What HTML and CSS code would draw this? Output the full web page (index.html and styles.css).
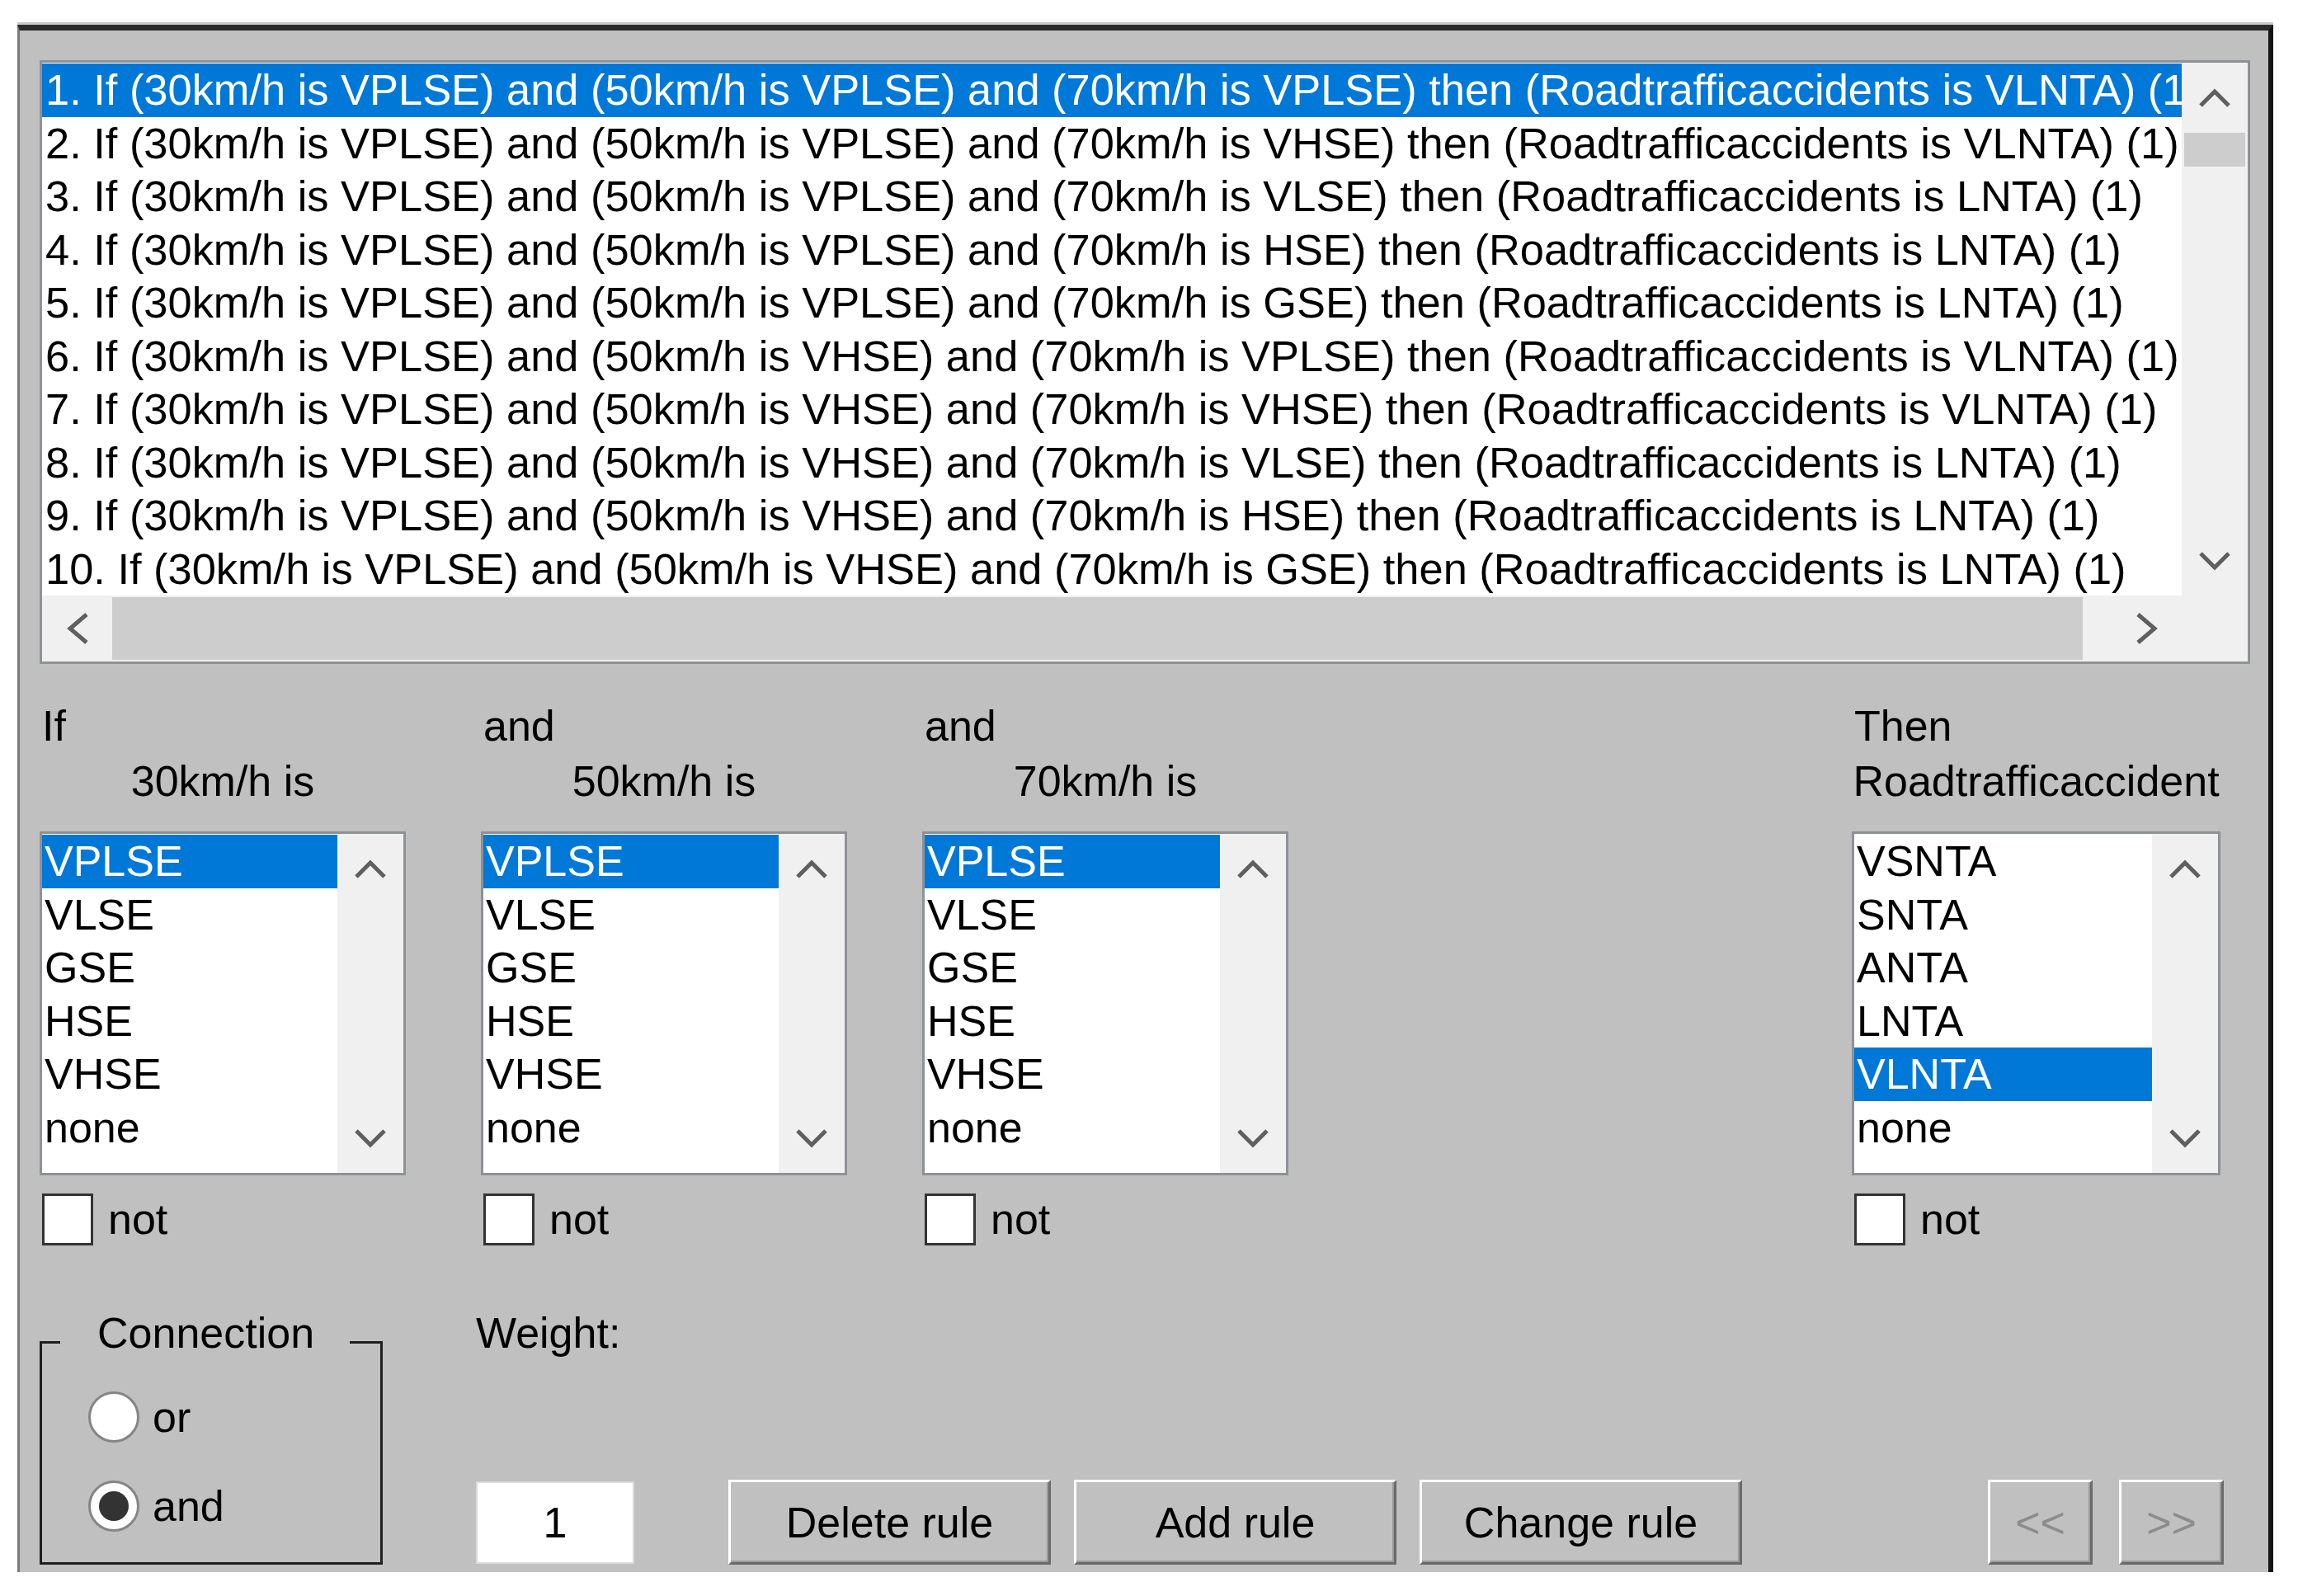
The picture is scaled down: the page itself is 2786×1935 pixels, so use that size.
FILE: index.html
```html
<!DOCTYPE html>
<html lang="en">
  <head>
    <meta charset="UTF-8" />
    <title>Rule Editor</title>
    <link rel="stylesheet" href="styles.css">
  </head>
  <body>
    <div class="fis-panel">
      <!-- rule list -->
      <div class="rule-list">
        <ul class="rule-rows">
          <li class="selected">1. If (30km/h is VPLSE) and (50km/h is VPLSE) and (70km/h is VPLSE) then (Roadtrafficaccidents is VLNTA) (1)</li>
          <li>2. If (30km/h is VPLSE) and (50km/h is VPLSE) and (70km/h is VHSE) then (Roadtrafficaccidents is VLNTA) (1)</li>
          <li>3. If (30km/h is VPLSE) and (50km/h is VPLSE) and (70km/h is VLSE) then (Roadtrafficaccidents is LNTA) (1)</li>
          <li>4. If (30km/h is VPLSE) and (50km/h is VPLSE) and (70km/h is HSE) then (Roadtrafficaccidents is LNTA) (1)</li>
          <li>5. If (30km/h is VPLSE) and (50km/h is VPLSE) and (70km/h is GSE) then (Roadtrafficaccidents is LNTA) (1)</li>
          <li>6. If (30km/h is VPLSE) and (50km/h is VHSE) and (70km/h is VPLSE) then (Roadtrafficaccidents is VLNTA) (1)</li>
          <li>7. If (30km/h is VPLSE) and (50km/h is VHSE) and (70km/h is VHSE) then (Roadtrafficaccidents is VLNTA) (1)</li>
          <li>8. If (30km/h is VPLSE) and (50km/h is VHSE) and (70km/h is VLSE) then (Roadtrafficaccidents is LNTA) (1)</li>
          <li>9. If (30km/h is VPLSE) and (50km/h is VHSE) and (70km/h is HSE) then (Roadtrafficaccidents is LNTA) (1)</li>
          <li>10. If (30km/h is VPLSE) and (50km/h is VHSE) and (70km/h is GSE) then (Roadtrafficaccidents is LNTA) (1)</li>
        </ul>
        <div class="vscroll">
          <div class="sb-btn"><svg class="chev" width="40" height="24" viewBox="0 0 40 24"><polyline points="3,21 20,4 37,21"/></svg></div>
          <div class="vtrack"><div class="vthumb"></div></div>
          <div class="sb-btn"><svg class="chev" width="40" height="24" viewBox="0 0 40 24"><polyline points="3,3 20,20 37,3"/></svg></div>
        </div>
        <div class="hscroll">
          <div class="sb-btn"><svg class="chev" width="32" height="40" viewBox="0 0 32 40"><polyline points="27,3 7,20 27,37"/></svg></div>
          <div class="htrack"><div class="hthumb"></div></div>
          <div class="sb-btn"><svg class="chev" width="32" height="40" viewBox="0 0 32 40"><polyline points="5,3 25,20 5,37"/></svg></div>
        </div>
        <div class="sb-corner"></div>
      </div>

      <!-- antecedent / consequent pickers -->
      <div class="rule-builder">
        <div class="var-col">
          <div class="lead">If</div>
          <div class="var-name">30km/h is</div>
          <div class="listbox">
            <ul class="mf-list">
              <li class="selected">VPLSE</li>
              <li>VLSE</li>
              <li>GSE</li>
              <li>HSE</li>
              <li>VHSE</li>
              <li>none</li>
            </ul>
            <div class="vscroll">
              <div class="sb-btn"><svg class="chev" width="40" height="24" viewBox="0 0 40 24"><polyline points="3,21 20,4 37,21"/></svg></div>
              <div class="sb-btn"><svg class="chev" width="40" height="24" viewBox="0 0 40 24"><polyline points="3,3 20,20 37,3"/></svg></div>
            </div>
          </div>
          <div class="not-check"><span class="box"></span>not</div>
        </div>

        <div class="var-col">
          <div class="lead">and</div>
          <div class="var-name">50km/h is</div>
          <div class="listbox">
            <ul class="mf-list">
              <li class="selected">VPLSE</li>
              <li>VLSE</li>
              <li>GSE</li>
              <li>HSE</li>
              <li>VHSE</li>
              <li>none</li>
            </ul>
            <div class="vscroll">
              <div class="sb-btn"><svg class="chev" width="40" height="24" viewBox="0 0 40 24"><polyline points="3,21 20,4 37,21"/></svg></div>
              <div class="sb-btn"><svg class="chev" width="40" height="24" viewBox="0 0 40 24"><polyline points="3,3 20,20 37,3"/></svg></div>
            </div>
          </div>
          <div class="not-check"><span class="box"></span>not</div>
        </div>

        <div class="var-col">
          <div class="lead">and</div>
          <div class="var-name">70km/h is</div>
          <div class="listbox">
            <ul class="mf-list">
              <li class="selected">VPLSE</li>
              <li>VLSE</li>
              <li>GSE</li>
              <li>HSE</li>
              <li>VHSE</li>
              <li>none</li>
            </ul>
            <div class="vscroll">
              <div class="sb-btn"><svg class="chev" width="40" height="24" viewBox="0 0 40 24"><polyline points="3,21 20,4 37,21"/></svg></div>
              <div class="sb-btn"><svg class="chev" width="40" height="24" viewBox="0 0 40 24"><polyline points="3,3 20,20 37,3"/></svg></div>
            </div>
          </div>
          <div class="not-check"><span class="box"></span>not</div>
        </div>

        <div class="var-col then-col">
          <div class="lead">Then</div>
          <div class="var-name">Roadtrafficaccident</div>
          <div class="listbox">
            <ul class="mf-list">
              <li>VSNTA</li>
              <li>SNTA</li>
              <li>ANTA</li>
              <li>LNTA</li>
              <li class="selected">VLNTA</li>
              <li>none</li>
            </ul>
            <div class="vscroll">
              <div class="sb-btn"><svg class="chev" width="40" height="24" viewBox="0 0 40 24"><polyline points="3,21 20,4 37,21"/></svg></div>
              <div class="sb-btn"><svg class="chev" width="40" height="24" viewBox="0 0 40 24"><polyline points="3,3 20,20 37,3"/></svg></div>
            </div>
          </div>
          <div class="not-check"><span class="box"></span>not</div>
        </div>
      </div>

      <!-- connection, weight and buttons -->
      <div class="bottom-row">
        <fieldset class="connection">
          <legend>Connection</legend>
          <div class="radio-row"><span class="radio"></span>or</div>
          <div class="radio-row"><span class="radio on"></span>and</div>
        </fieldset>

        <div class="weight-area">
          <div class="weight-label">Weight:</div>
          <div class="action-row">
            <div class="weight-input">1</div>
            <div class="rule-btns">
              <button class="btn">Delete rule</button>
              <button class="btn">Add rule</button>
              <button class="btn">Change rule</button>
            </div>
            <div class="nav-btns">
              <button class="btn" disabled>&lt;&lt;</button>
              <button class="btn" disabled>&gt;&gt;</button>
            </div>
          </div>
        </div>
      </div>
    </div>
  </body>
</html>
```

FILE: styles.css
```css
* {
  box-sizing: border-box;
}

:root {
  --panel-bg: #c0c0c0;
  --select-bg: #0078d7;
  --scroll-bg: #f0f0f0;
  --thumb-bg: #cdcdcd;
  --list-border: #8e9196;
}

body {
  margin: 0;
  background: #ffffff;
  font-family: "Liberation Sans", Arial, sans-serif;
  font-size: 52px;
  color: #000000;
}

.fis-panel {
  margin: 30px 30px 0 21px;
  background: var(--panel-bg);
  border-top: 7px solid #2b2b2b;
  border-left: 3px solid #7a7a7a;
  border-right: 6px solid #141414;
  box-shadow: 0 -3px 0 #c9c9c9;
  padding: 36px 22px 9px 24px;
}

ul {
  margin: 0;
  padding: 0;
  list-style: none;
}

.selected {
  background: var(--select-bg);
  color: #ffffff;
}

/* big rule list */

.rule-list {
  display: grid;
  grid-template-columns: 1fr 80px;
  grid-template-rows: 646px 80px;
  border: 3px solid var(--list-border);
  background: #ffffff;
}

.rule-rows {
  padding-top: 1px;
  overflow: hidden;
  white-space: nowrap;
  font-size: 52.4px;
}

.rule-rows li {
  line-height: 64.5px;
  padding-left: 4px;
}

.chev {
  fill: none;
  stroke: #5f5f5f;
  stroke-width: 5;
}

.vscroll {
  background: var(--scroll-bg);
  display: flex;
  flex-direction: column;
  justify-content: space-between;
}

.sb-btn {
  height: 85px;
  display: flex;
  align-items: center;
  justify-content: center;
}

.vtrack {
  flex: 1;
  padding: 0 3px;
}

.vthumb {
  height: 41px;
  background: var(--thumb-bg);
}

.hscroll {
  display: flex;
  background: var(--scroll-bg);
}

.hscroll .sb-btn {
  width: 85px;
  height: auto;
}

.htrack {
  flex: 1;
  display: flex;
  padding: 2px 35px 2px 0;
}

.hthumb {
  flex: 1;
  background: var(--thumb-bg);
}

.sb-corner {
  background: var(--scroll-bg);
}

/* variable columns */

.rule-builder {
  display: flex;
  gap: 91px;
  margin-top: 42px;
  padding-right: 36px;
}

.var-col {
  width: 444px;
  display: flex;
  flex-direction: column;
}

.var-col.then-col {
  width: 447px;
  margin-left: auto;
}

.lead,
.var-name {
  line-height: 67px;
  white-space: nowrap;
}

.lead {
  padding-left: 3px;
}

.var-name {
  text-align: center;
}

.listbox {
  margin-top: 27px;
  height: 417px;
  display: flex;
  border: 3px solid var(--list-border);
  background: #ffffff;
}

.mf-list {
  flex: 1;
  padding-top: 1px;
  overflow: hidden;
}

.mf-list li {
  line-height: 64.5px;
  padding-left: 3px;
}

.listbox .vscroll {
  width: 80px;
}

.not-check {
  margin-top: 22px;
  display: flex;
  align-items: center;
  gap: 18px;
  padding-left: 3px;
  line-height: 63px;
}

.box {
  width: 62px;
  height: 63px;
  border: 3px solid #333333;
  background: #ffffff;
}

/* bottom row */

.bottom-row {
  display: flex;
  margin-top: 76px;
}

.connection {
  margin: 0;
  width: 416px;
  min-width: 0;
  padding: 20px 0 38px 22px;
  border: 3px solid #1f1f1f;
}

.connection legend {
  padding: 0 43px 22px 45px;
  line-height: 60px;
}

.radio-row {
  display: flex;
  align-items: center;
  gap: 16px;
  height: 60px;
  padding-left: 34px;
}

.radio-row + .radio-row {
  margin-top: 48px;
}

.radio {
  width: 62px;
  height: 62px;
  border-radius: 50%;
  border: 3px solid #858585;
  background: #ffffff;
  display: flex;
  align-items: center;
  justify-content: center;
}

.radio.on::after {
  content: "";
  width: 36px;
  height: 36px;
  border-radius: 50%;
  background: #333333;
}

.weight-area {
  flex: 1;
  margin-left: 113px;
  padding-right: 32px;
  display: flex;
  flex-direction: column;
}

.weight-label {
  line-height: 60px;
}

.action-row {
  margin-top: 148px;
  display: flex;
  align-items: center;
}

.weight-input {
  width: 192px;
  height: 100px;
  margin-right: 114px;
  background: #ffffff;
  border: 2px solid #dadada;
  text-align: center;
  line-height: 96px;
}

.rule-btns {
  display: flex;
  gap: 28px;
}

.nav-btns {
  display: flex;
  gap: 32px;
  margin-left: auto;
}

.btn {
  width: 391px;
  height: 103px;
  padding: 0;
  font: inherit;
  color: #000000;
  background: var(--panel-bg);
  border: 3px solid;
  border-color: #ffffff #6a6a6a #6a6a6a #ffffff;
  box-shadow: inset -2px -2px 0 #9a9a9a;
}

.nav-btns .btn {
  width: 127px;
  color: #8c8c8c;
}
```
